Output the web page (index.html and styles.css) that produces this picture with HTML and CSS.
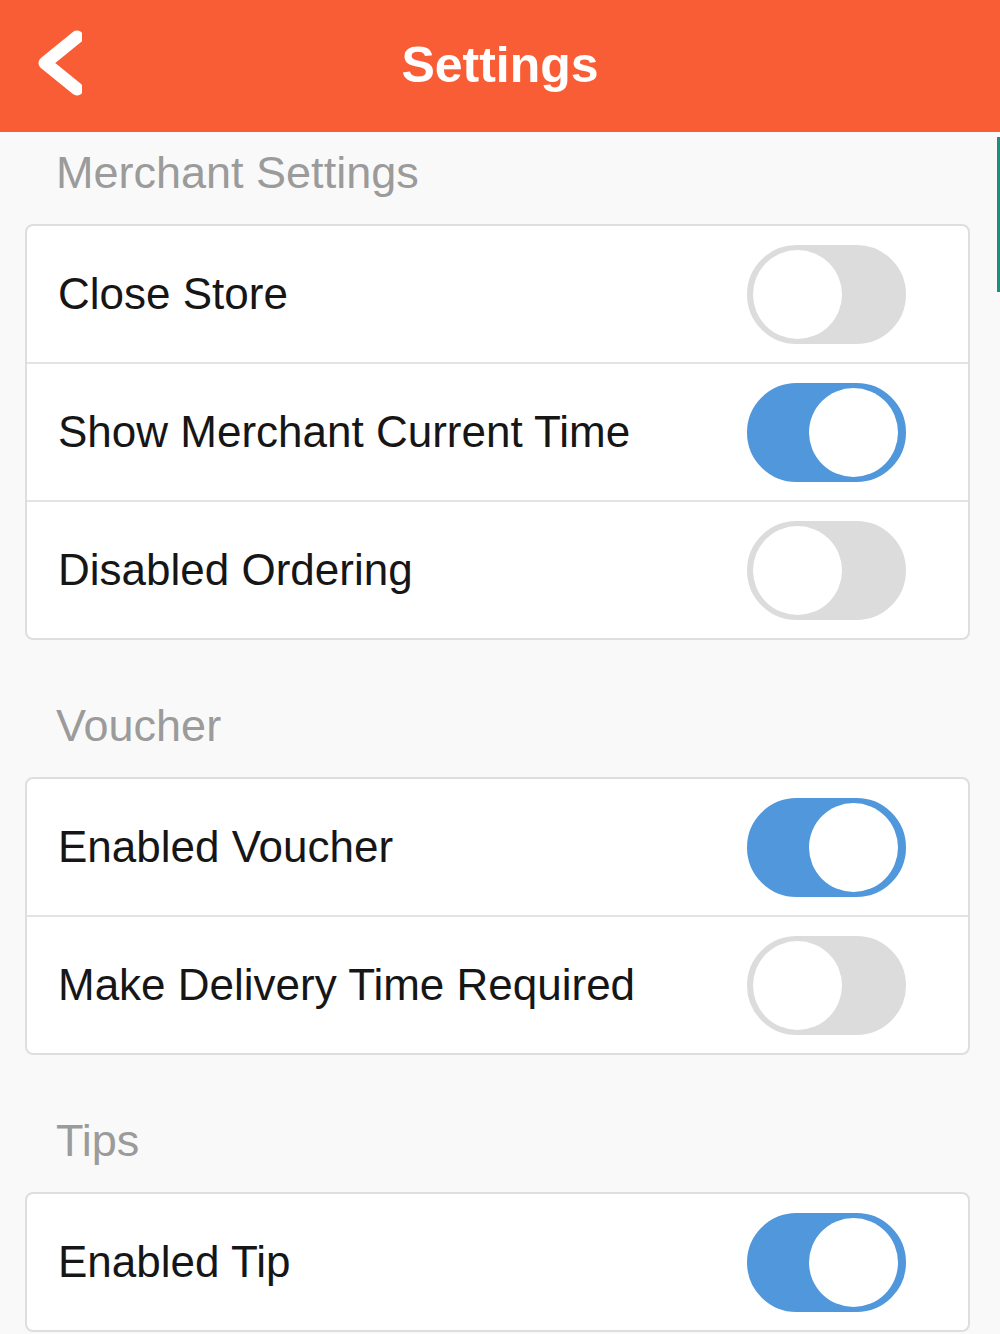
FILE: index.html
```html
<!DOCTYPE html>
<html lang="en">
<head>
    <meta charset="UTF-8">
    <meta name="viewport" content="width=device-width, initial-scale=1.0">
    <title>Settings</title>
    <link rel="stylesheet" href="styles.css">
</head>
<body>
    <header class="topbar">
        <a class="back" href="#">
            <svg width="56" height="80" viewBox="0 0 56 80">
                <polyline points="51,10 19,36 51,62" fill="none" stroke="#fff" stroke-width="13" stroke-linecap="round" stroke-linejoin="round"/>
            </svg>
        </a>
        <h1>Settings</h1>
        <span></span>
    </header>

    <div class="edge"></div>

    <main class="content">
        <section class="group">
            <h2>Merchant Settings</h2>
            <div class="card">
                <div class="row">
                    <span>Close Store</span>
                    <label class="switch"><input type="checkbox"><i></i></label>
                </div>
                <div class="row">
                    <span>Show Merchant Current Time</span>
                    <label class="switch"><input type="checkbox" checked><i></i></label>
                </div>
                <div class="row">
                    <span>Disabled Ordering</span>
                    <label class="switch"><input type="checkbox"><i></i></label>
                </div>
            </div>
        </section>

        <section class="group">
            <h2>Voucher</h2>
            <div class="card">
                <div class="row">
                    <span>Enabled Voucher</span>
                    <label class="switch"><input type="checkbox" checked><i></i></label>
                </div>
                <div class="row">
                    <span>Make Delivery Time Required</span>
                    <label class="switch"><input type="checkbox"><i></i></label>
                </div>
            </div>
        </section>

        <section class="group">
            <h2>Tips</h2>
            <div class="card">
                <div class="row">
                    <span>Enabled Tip</span>
                    <label class="switch"><input type="checkbox" checked><i></i></label>
                </div>
            </div>
        </section>
    </main>
</body>
</html>
```

FILE: styles.css
```css
body {
    font-family: "Liberation Sans", Arial, sans-serif;
    background-color: #f9f9f9;
    margin: 0;
    padding: 0;
    position: relative;
}

.topbar {
    height: 132px;
    background-color: #f95d35;
    display: grid;
    grid-template-columns: 1fr auto 1fr;
    align-items: center;
}

.back {
    display: flex;
    padding-left: 26px;
    padding-top: 2px;
}

.topbar h1 {
    margin: 0;
    color: #fff;
    font-size: 50px;
    font-weight: bold;
    padding-bottom: 2px;
}

/* scroll edge on the right */
.edge {
    position: absolute;
    top: 137px;
    right: 0;
    width: 3px;
    height: 155px;
    background: #1e8f7c;
}

.content {
    padding: 16px 30px 40px 25px;
}

.group + .group {
    margin-top: 61px;
}

.group h2 {
    margin: 0 0 26px 31px;
    font-size: 45px;
    line-height: 50px;
    font-weight: normal;
    color: #9b9b9b;
}

.card {
    background: white;
    border: 2px solid #dedede;
    border-radius: 8px;
}

.row {
    height: 136px;
    display: flex;
    align-items: center;
    justify-content: space-between;
    padding: 0 62px 0 31px;
    font-size: 44px;
    color: #161616;
}

.row + .row {
    border-top: 2px solid #e3e3e3;
}

.switch {
    position: relative;
    width: 159px;
    height: 99px;
}

.switch input {
    display: none;
}

.switch i {
    display: block;
    box-sizing: border-box;
    width: 100%;
    height: 100%;
    border-radius: 50px;
    border: 5px solid #dcdcdc;
    background: #dcdcdc;
}

.switch i::after {
    content: "";
    position: absolute;
    top: 5px;
    left: 6px;
    width: 89px;
    height: 89px;
    border-radius: 50%;
    background: white;
}

.switch input:checked + i {
    border-color: #5097db;
    background: #5097db;
}

.switch input:checked + i::after {
    left: 62px;
}
```
